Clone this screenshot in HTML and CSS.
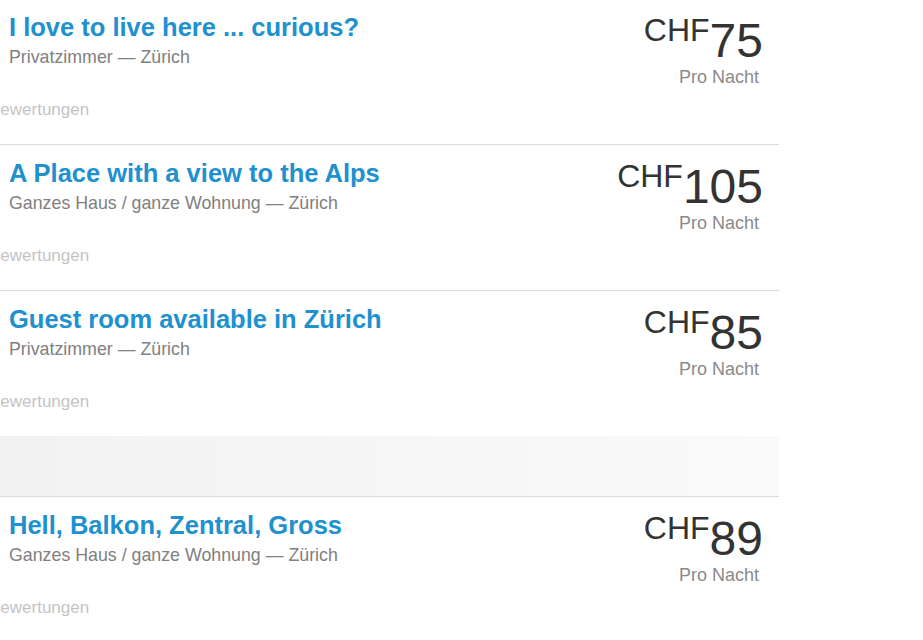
FILE: index.html
```html
<!DOCTYPE html>
<html lang="de">
<head>
<meta charset="utf-8">
<title>Listings</title>
<link rel="stylesheet" href="styles.css">
</head>
<body>
<div class="list">
  <div class="listing">
    <div class="info">
      <div class="title">I love to live here ... curious?</div>
      <div class="sub">Privatzimmer — Zürich</div>
      <div class="reviews">Bewertungen</div>
    </div>
    <div class="price-col">
      <div class="price"><span class="cur">CHF</span>75</div>
      <div class="per">Pro Nacht</div>
    </div>
  </div>
  <div class="listing">
    <div class="info">
      <div class="title">A Place with a view to the Alps</div>
      <div class="sub">Ganzes Haus / ganze Wohnung — Zürich</div>
      <div class="reviews">Bewertungen</div>
    </div>
    <div class="price-col">
      <div class="price"><span class="cur">CHF</span>105</div>
      <div class="per">Pro Nacht</div>
    </div>
  </div>
  <div class="listing">
    <div class="info">
      <div class="title">Guest room available in Zürich</div>
      <div class="sub">Privatzimmer — Zürich</div>
      <div class="reviews">Bewertungen</div>
    </div>
    <div class="price-col">
      <div class="price"><span class="cur">CHF</span>85</div>
      <div class="per">Pro Nacht</div>
    </div>
  </div>
  <div class="band"></div>
  <div class="listing">
    <div class="info">
      <div class="title">Hell, Balkon, Zentral, Gross</div>
      <div class="sub">Ganzes Haus / ganze Wohnung — Zürich</div>
      <div class="reviews">Bewertungen</div>
    </div>
    <div class="price-col">
      <div class="price"><span class="cur">CHF</span>89</div>
      <div class="per">Pro Nacht</div>
    </div>
  </div>
</div>
</body>
</html>
```
FILE: styles.css
```css
html, body {
  margin: 0;
  padding: 0;
  background: #fff;
  overflow: hidden;
}
body {
  font-family: "Liberation Sans", Arial, sans-serif;
}
.list {
  width: 779px;
  margin-top: -2px;
}
.listing {
  border-top: 1px solid #dadada;
  height: 145px;
  display: flex;
  justify-content: space-between;
  padding: 0 16px 0 9px;
}
.info {
  padding-top: 14px;
}
.title {
  font-size: 25.5px;
  line-height: 28px;
  font-weight: bold;
  color: #2090cf;
}
.sub {
  margin-top: 5px;
  font-size: 17.8px;
  line-height: 22px;
  color: #808080;
}
.reviews {
  margin-top: 32px;
  margin-left: -20px;
  font-size: 17px;
  line-height: 20px;
  color: #c4c4c4;
}
.price-col {
  padding-top: 18px;
  text-align: right;
}
.price {
  font-size: 48px;
  line-height: 47px;
  color: #333;
}
.cur {
  font-size: 32px;
  line-height: 20px;
  vertical-align: 16px;
}
.per {
  margin-top: 2px;
  padding-right: 4px;
  font-size: 18px;
  line-height: 22px;
  color: #8a8a8a;
}
.band {
  height: 60px;
  background: linear-gradient(to right, #f2f2f2, #fafafa);
}
```
